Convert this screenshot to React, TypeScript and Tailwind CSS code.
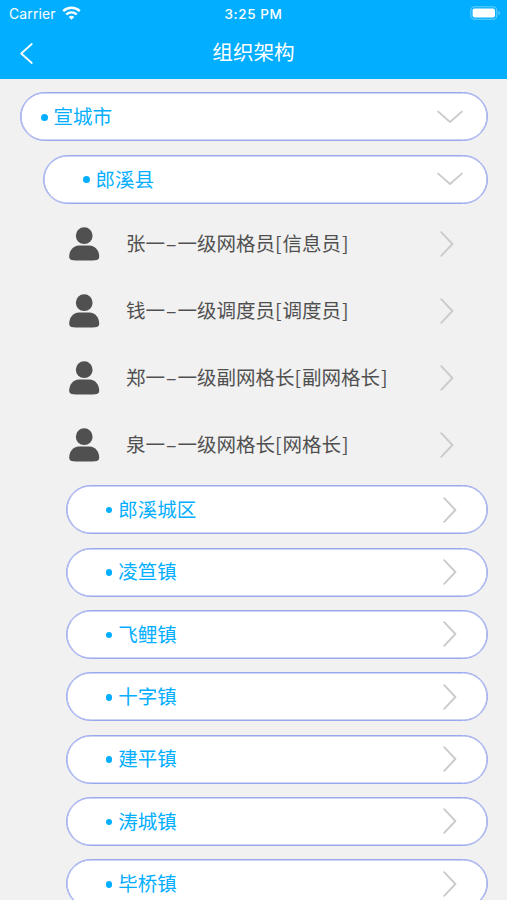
import { useState } from 'react'

interface Person {
  name: string
  role: string
  duty: string
}

const PEOPLE: Person[] = [
  { name: '张一', role: '一级网格员', duty: '信息员' },
  { name: '钱一', role: '一级调度员', duty: '调度员' },
  { name: '郑一', role: '一级副网格长', duty: '副网格长' },
  { name: '泉一', role: '一级网格长', duty: '网格长' },
]

const TOWNS = ['郎溪城区', '凌笪镇', '飞鲤镇', '十字镇', '建平镇', '涛城镇', '毕桥镇']

function ChevronDown() {
  return (
    <svg width="26" height="14" viewBox="0 0 26 14" fill="none" stroke="#cbcbcb" strokeWidth="1.9" strokeLinecap="round" strokeLinejoin="round">
      <polyline points="1.2,1.6 13,12 24.8,1.6" />
    </svg>
  )
}

function ChevronRight() {
  return (
    <svg width="14" height="26" viewBox="0 0 14 26" fill="none" stroke="#cbcbcb" strokeWidth="1.9" strokeLinecap="round" strokeLinejoin="round">
      <polyline points="1.2,1.2 12.4,13 1.2,24.8" />
    </svg>
  )
}

function StatusBar() {
  return (
    <div className="grid h-[27px] grid-cols-3 items-center font-['Inter','Liberation_Sans',sans-serif] text-[13.5px]">
      <div className="flex items-center gap-[6px] pl-[9px]">
        <span className="text-[14px] tracking-[0.1px]">Carrier</span>
        <svg width="19" height="14" viewBox="0 0 19 14" fill="none" stroke="white" strokeWidth="2.4" className="-mt-[2px]">
          <path d="M1.2 5.2a11.8 11.8 0 0 1 16.6 0" />
          <path d="M4.3 8.5a7.4 7.4 0 0 1 10.4 0" />
          <path d="M9.5 13.8 6.7 11a4 4 0 0 1 5.6 0z" fill="white" stroke="none" />
        </svg>
      </div>
      <div className="pt-px text-center font-medium tracking-[0.6px]">3:25 PM</div>
      <div className="flex justify-end pr-[6px]">
        <svg width="31" height="14" viewBox="0 0 31 14" className="-mt-px">
          <rect x="0.8" y="0.8" width="26" height="12.4" rx="3.8" fill="none" stroke="white" strokeOpacity="0.4" strokeWidth="1.1" />
          <rect x="2.6" y="2.5" width="22.4" height="9" rx="2" fill="white" />
          <path d="M28.5 5v4c.9-.3 1.5-1.1 1.5-2s-.6-1.7-1.5-2z" fill="white" fillOpacity="0.4" />
        </svg>
      </div>
    </div>
  )
}

function Header() {
  return (
    <header className="h-[79px] bg-[#02aeff] text-white">
      <StatusBar />
      <div className="grid h-[52px] grid-cols-[60px_1fr_60px] items-center">
        <button className="pl-[20px]" aria-label="返回">
          <svg width="13" height="21" viewBox="0 0 13 21" fill="none" stroke="white" strokeWidth="1.7" strokeLinecap="round" strokeLinejoin="round">
            <polyline points="11.8,1 1.2,10.5 11.8,20" />
          </svg>
        </button>
        <h1 className="pb-[3px] text-center text-[20.6px] leading-none">组织架构</h1>
      </div>
    </header>
  )
}

interface RegionProps {
  name: string
  open?: boolean
  className: string
  onClick?: () => void
}

function Region({ name, open, className, onClick }: RegionProps) {
  return (
    <button
      onClick={onClick}
      className={`flex h-[49px] shrink-0 items-center rounded-full border border-[#9aa8ee] bg-white text-left text-[#02aeff] shadow-[inset_0_0_0_0.6px_#9aa8ee] ${className}`}
    >
      <span className="mt-px mr-[6px] h-[6.6px] w-[6.6px] rounded-full bg-[#02aeff]" />
      <span className="flex-1 pb-[2px] text-[19.5px] leading-none">{name}</span>
      {open ? <ChevronDown /> : <ChevronRight />}
    </button>
  )
}

function PersonRow({ name, role, duty }: Person) {
  return (
    <div className="flex h-[67px] items-center pr-[53px] pl-[68px] text-[#505050]">
      <svg width="32" height="34" viewBox="0 0 32 34" fill="currentColor">
        <circle cx="16.2" cy="8.7" r="8.4" />
        <path d="M11 18.5h10.4c6 0 9.8 5.4 9.8 11 0 2.7-1.3 3.6-4.2 3.8-6 .4-15.6.4-21.6 0-2.9-.2-4.2-1.1-4.2-3.8 0-5.6 3.8-11 9.8-11z" />
      </svg>
      <span className="ml-[26px] flex-1 pb-[2px] text-[19.5px] leading-none">
        {name}
        <span className="mx-px">–</span>
        {role}
        <span className="mr-px">[</span>
        {duty}
        <span className="ml-px">]</span>
      </span>
      <ChevronRight />
    </div>
  )
}

export default function App() {
  const [cityOpen, setCityOpen] = useState(true)
  const [countyOpen, setCountyOpen] = useState(true)

  return (
    <div className="flex h-[900px] w-[507px] flex-col overflow-hidden bg-[#f1f1f1] font-['Noto_Sans_CJK_SC',sans-serif]">
      <Header />
      <main className="flex flex-col pt-[13.4px]">
        <Region
          name="宣城市"
          open={cityOpen}
          onClick={() => setCityOpen(!cityOpen)}
          className="mr-[19px] ml-[20px] pr-[24px] pl-[20px]"
        />
        {cityOpen && (
          <Region
            name="郎溪县"
            open={countyOpen}
            onClick={() => setCountyOpen(!countyOpen)}
            className="mt-[13.4px] mr-[19px] ml-[43px] pr-[24px] pl-[39px]"
          />
        )}
        {cityOpen && countyOpen && (
          <>
            <div className="pt-[6.6px] pb-[6.8px]">
              {PEOPLE.map((p) => (
                <PersonRow key={p.name} {...p} />
              ))}
            </div>
            <div className="flex flex-col gap-[13.35px]">
              {TOWNS.map((town) => (
                <Region key={town} name={town} className="mr-[19px] ml-[66px] pr-[30px] pl-[38.6px]" />
              ))}
            </div>
          </>
        )}
      </main>
    </div>
  )
}
